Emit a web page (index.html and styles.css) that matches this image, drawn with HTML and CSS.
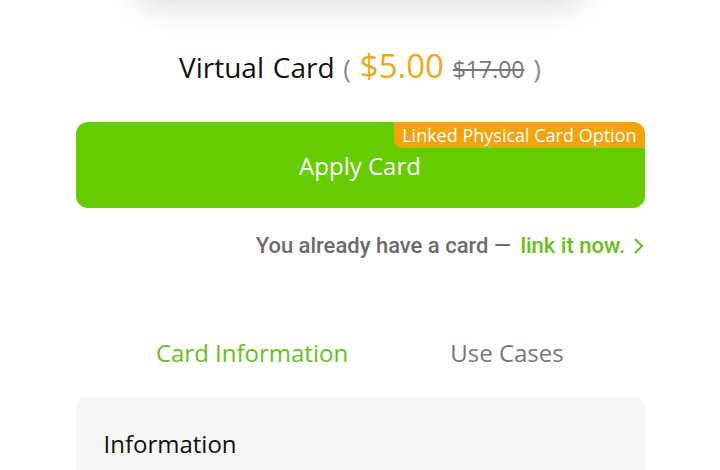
FILE: index.html
```html
<!DOCTYPE html>
<html lang="en">
<head>
  <meta charset="UTF-8">
  <meta name="viewport" content="width=device-width, initial-scale=1.0">
  <title>Virtual Card</title>
  <link rel="stylesheet" href="styles.css">
</head>
<body>
  <div class="card-preview"></div>

  <div class="page">
    <h2 class="card-title">
      Virtual Card
      <span class="paren">(</span>
      <span class="price">$5.00</span>
      <span class="old-price">$17.00</span>
      <span class="paren">)</span>
    </h2>

    <button class="apply-button">
      Apply Card
      <span class="badge">Linked Physical Card Option</span>
    </button>

    <p class="link-line">
      You already have a card —
      <a href="#" class="link-now">link it now.
        <svg width="12" height="18" viewBox="0 0 12 18"><path d="M2 2 L9 9 L2 16" fill="none" stroke="#66bb1e" stroke-width="2"/></svg>
      </a>
    </p>

    <div class="tabs">
      <div class="tab active">Card Information</div>
      <div class="tab">Use Cases</div>
    </div>

    <div class="info-panel">
      <h3>Information</h3>
    </div>
  </div>
</body>
</html>
```

FILE: styles.css
```css
body {
  margin: 0;
  font-family: 'Open Sans', sans-serif;
  background-color: #ffffff;
  color: #111;
  overflow: hidden;
}

.card-preview {
  width: 440px;
  height: 40px;
  margin: -44px auto 0;
  background-color: #ffffff;
  border-radius: 12px;
  box-shadow: 0 8px 34px rgba(0, 0, 0, 0.16);
}

.page {
  width: 569px;
  margin: 0 auto;
}

.card-title {
  margin: 50px 0 0;
  text-align: center;
  font-size: 28px;
  font-weight: 400;
  line-height: 40px;
  word-spacing: 1.5px;
}

.paren {
  color: #888;
  font-size: 26px;
}

.price {
  color: #eaa920;
  font-size: 33px;
}

.old-price {
  color: #777;
  font-size: 23px;
  text-decoration: line-through;
}

.apply-button {
  position: relative;
  display: block;
  width: 100%;
  height: 86px;
  margin-top: 33px;
  background-color: #66cc00;
  border: none;
  border-radius: 12px;
  color: #ffffff;
  font-family: 'Open Sans', sans-serif;
  font-size: 24px;
  padding: 0;
}

.badge {
  position: absolute;
  top: 0;
  right: 0;
  height: 26px;
  padding: 0 8px;
  background-color: #f5a30c;
  border-radius: 0 12px 0 8px;
  font-size: 18px;
  line-height: 26px;
}

.link-line {
  margin: 25px 0 0;
  text-align: right;
  font-family: Roboto, sans-serif;
  font-weight: 500;
  font-size: 22px;
  color: #6b6b6b;
}

.link-now {
  color: #6abd1e;
  text-decoration: none;
  margin-left: 4px;
}

.link-now svg {
  vertical-align: -2px;
  margin-left: 2px;
}

.tabs {
  display: flex;
  margin-top: 78px;
  padding: 0 10px 0 49px;
}

.tab {
  flex: 1;
  text-align: center;
  font-size: 24px;
  color: #777;
}

.tab.active {
  color: #6abd1e;
}

.info-panel {
  margin-top: 28px;
  background-color: #f7f7f7;
  border-radius: 10px;
  padding: 30px 28px;
  height: 100px;
}

.info-panel h3 {
  margin: 0;
  font-size: 24px;
  font-weight: 400;
}
```
